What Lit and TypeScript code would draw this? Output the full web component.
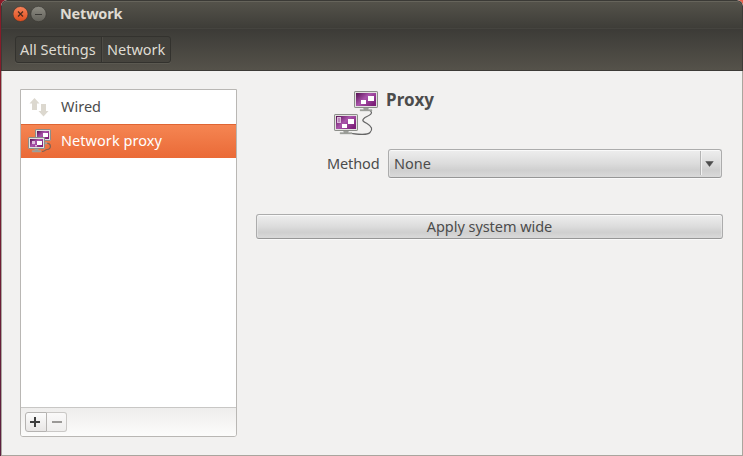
import { LitElement, html, css, svg } from "lit";
import { customElement } from "lit/decorators.js";

const monitor = (x: number, y: number, w: number, h: number) => svg`
  <path d="M${x + w * 0.4} ${y + h}h${w * 0.2}v1.500h${w * 0.15}v1.500h${-w * 0.5}v-1.500h${w * 0.15}z" fill="#999b96" stroke="#aaaca7" stroke-width=".4"/>
  <rect x=${x + 0.5} y=${y + 0.5} width=${w - 1} height=${h - 1} rx=".6" fill="#e2e2df" stroke="#8b8d88"/>
  <rect x=${x + 2} y=${y + 2} width=${w - 4} height=${h - 4} fill="url(#screen)"/>`;

const screenFill = svg`<defs><linearGradient id="screen" x1="0" y1="0" x2="1" y2=".7">
  <stop offset="0" stop-color="#561052"/><stop offset=".5" stop-color="#aa55ab"/><stop offset="1" stop-color="#7d2079"/>
</linearGradient></defs>`;

@customElement("app-root")
export class AppRoot extends LitElement {
  static styles = css`
    :host { display: block; width: 743px; height: 456px; background: linear-gradient(90deg, transparent 50%, #e9604a 50%) 0 0 / 100% 8px no-repeat, linear-gradient(#8b1c28, #7b1c2e 35%, #5b2040);
      font: 14.5px/20px "Noto Sans", "Open Sans", sans-serif; color: #4c4c4c; }
    * { box-sizing: border-box; }
    svg { display: block; flex: none; }
    .window { margin-left: 1px; width: 742px; height: 456px; display: flex; flex-direction: column;
      background: #f2f1f0; border-radius: 6px 6px 0 0; overflow: hidden; }
    .title { height: 29px; flex: none; display: flex; align-items: center; padding: 0 0 2px 12px;
      border: 1px solid #3b3a36; border-radius: 6px 6px 0 0; box-shadow: inset 0 1px #66645b; background: linear-gradient(#55534b, #3e3d38);
      border-bottom: 1px solid #45443f; color: #dfdbd2; font-weight: 700; padding-left: 11px; }
    .title svg { margin-top: 1px; }
    .title span { margin: -2px 0 0 11px; letter-spacing: -.2px; }
    .toolbar { height: 42px; flex: none; padding: 7px 0 0 13px; border: 1px solid #3d3b37; border-top: 0;
      background: linear-gradient(#3c3b37, #55524a); }
    .crumbs { display: inline-flex; height: 27px; border: 1px solid #33322e; border-radius: 3px;
      background: linear-gradient(#403f3a, #46443e); box-shadow: 0 1px #5b5951; color: #dfdbd2; }
    .crumbs span { padding: 2px 4px; white-space: nowrap; }
    .crumbs .first { width: 86px; border-right: 1px solid #34332f; }
    .crumbs .second { width: 68px; border-left: 1px solid #4d4b45; }
    .content { flex: 1; display: flex; gap: 19px; padding: 18px 0 0 18px; border: 1px solid #aaa59e; border-top: 0; }
    .sidebar { width: 217px; height: 348px; display: flex; flex-direction: column; background: #fff;
      border: 1px solid #b9b7b4; border-radius: 0 0 3px 3px; overflow: hidden; }
    .row { height: 34px; flex: none; display: flex; align-items: center; padding-left: 6px; gap: 8px; }
    .row svg { margin-top: 1px; }
    .row span { padding-bottom: 2px; }
    .selected span { padding-bottom: 4px; letter-spacing: .05px; }
    .selected { color: #fff; background: linear-gradient(#f58552, #ea6a37); border-top: 1px solid #df6533; }
    .footer { margin-top: auto; height: 29px; display: flex; padding: 4px; border-top: 1px solid #c8c7c5;
      background: linear-gradient(#eeedec, #fcfcfb); }
    .tool { width: 22px; height: 20px; display: grid; place-items: center; border: 1px solid #b5b3b1;
      background: linear-gradient(#fcfcfc, #e8e6e5); border-radius: 3px 0 0 3px; }
    .add { padding-right: 2px; }
    .remove { width: 20px; border-radius: 0 3px 3px 0; border-color: #cac8c6; border-left: 0; background: linear-gradient(#faf9f9, #efeeed); }
    .main { width: 467px; }
    .heading { display: flex; padding: 0 0 0 77px; height: 59px; }
    .heading svg { margin-top: 1px; }
    .heading h1 { margin: -1px 0 0 7px; font-size: 17px; line-height: 24px; letter-spacing: .1px; }
    .method { display: flex; align-items: center; padding-left: 71px; height: 30px; }
    .method label { width: 61px; letter-spacing: -.12px; }
    .combo, .apply { border: 1px solid #acacac; border-bottom-color: #969696; border-radius: 3px;
      background: linear-gradient(#eee, #dcdcdc 50%, #cfcfcf 75%, #d9d9d9);
      box-shadow: inset 0 1px #f9f9f9, inset 1px 0 #eeeeee88, inset -1px 0 #eeeeee88, 0 1px #f9f9f9; }
    .combo { width: 334px; height: 29px; display: flex; align-items: center; padding: 0 5px; }
    .divider { margin: 0 3px 0 auto; width: 2px; height: 24px; background: #b4b4b4; border-right: 1px solid #f2f2f2; }
    .arrow { height: 23px; width: 11px; padding: 2px 2px 0 0; display: grid; place-items: center; flex: none; }
    .apply { display: block; width: 467px; height: 25px; margin-top: 36px; padding: 0 0 2px; font: inherit; color: inherit; letter-spacing: -.05px; }
  `;

  render() {
    return html`
      <div class="window">
        <header class="title">
          <svg width="36" height="18" viewBox="0 0 36 18">
            <defs>
              <linearGradient id="close" x2="0" y2="1"><stop stop-color="#f7835a"/><stop offset="1" stop-color="#df4d1d"/></linearGradient>
              <linearGradient id="min" x2="0" y2="1"><stop stop-color="#8e8c83"/><stop offset="1" stop-color="#62615a"/></linearGradient>
            </defs>
            <circle cx="7.500" cy="9" r="7.500" fill="url(#close)" stroke="#35342f" stroke-width=".6"/>
            <path d="M5 6.500l5 5m0-5l-5 5" stroke="#4b2a1c" stroke-width="1.200"/>
            <circle cx="25.500" cy="9" r="7.700" fill="url(#min)" stroke="#35342f" stroke-width=".6"/>
            <path d="M22 9.500h7" stroke="#3b3a36"/>
          </svg>
          <span>Network</span>
        </header>
        <nav class="toolbar"><div class="crumbs"><span class="first">All Settings</span><span class="second">Network</span></div></nav>
        <div class="content">
          <aside class="sidebar">
            <div class="row">
              <svg width="26" height="24" viewBox="0 0 26 24">
                <path d="M7.500 2l5 5.500H10V14H5V7.500H2.500z" fill="#dcd8cf"/><path d="M16.500 20.500L11.500 15H14V8h5v7h2.500z" fill="#dcd8cf"/>
              </svg><span>Wired</span>
            </div>
            <div class="row selected">
              <svg width="26" height="26" viewBox="0 0 26 26">${screenFill}
                <path d="M15 22.500c3 0 3-2 5-2 5 0 4-7 0-6" fill="none" stroke="#7d6255" stroke-width="1.200"/>
                ${monitor(8, 0, 16, 12)}<path d="M16 4h5v4h-5z" fill="#fff"/>
                ${monitor(1, 8, 17, 12)}<path d="M10 12h5v4h-5z" fill="#fff"/><path d="M5 12h3v3H5zM8 16h2v1.500H8z" fill="#dfbfe0"/>
              </svg><span>Network proxy</span>
            </div>
            <footer class="footer">
              <div class="tool add"><svg width="10" height="10" viewBox="0 0 10 10"><path d="M0 5h10M5 0v10" stroke="#3e3e3e" stroke-width="2"/></svg></div>
              <div class="tool remove"><svg width="10" height="2" viewBox="0 0 10 2"><path d="M0 1h10" stroke="#9b9997" stroke-width="2"/></svg></div>
            </footer>
          </aside>
          <main class="main">
            <div class="heading">
              <svg width="46" height="47" viewBox="0 0 46 47">${screenFill}
                <path d="M37 20.500c4 3-1 5-5 7-4 3-2 4 2 6 5 3 6 6 3 9-3 3-10 2-18 1" fill="none" stroke="#666" stroke-width="1.200"/>
                ${monitor(21, 1, 24, 17)}<path d="M28 10h5v4h-5zM35 6h6v5h-6z" fill="#fff"/>
                ${monitor(1, 24, 24, 17)}<path d="M15 29h6v5h-6zM9 34h5v4H9z" fill="#fff"/><path d="M4 27h4v6H4z" fill="#d9bcd9"/><path d="M5 29h2M5 31h2" stroke="#8c2f89" stroke-width=".7"/>
              </svg><h1>Proxy</h1>
            </div>
            <div class="method"><label>Method</label>
              <div class="combo"><span>None</span><i class="divider"></i><span class="arrow"><svg width="9" height="6" viewBox="0 0 9 6"><path d="M.75.5h7.500L4.500 5.500z" fill="#4c4c4c" stroke="#4c4c4c" stroke-width=".5"/></svg></span></div>
            </div>
            <button class="apply">Apply system wide</button>
          </main>
        </div>
      </div>`;
  }
}
